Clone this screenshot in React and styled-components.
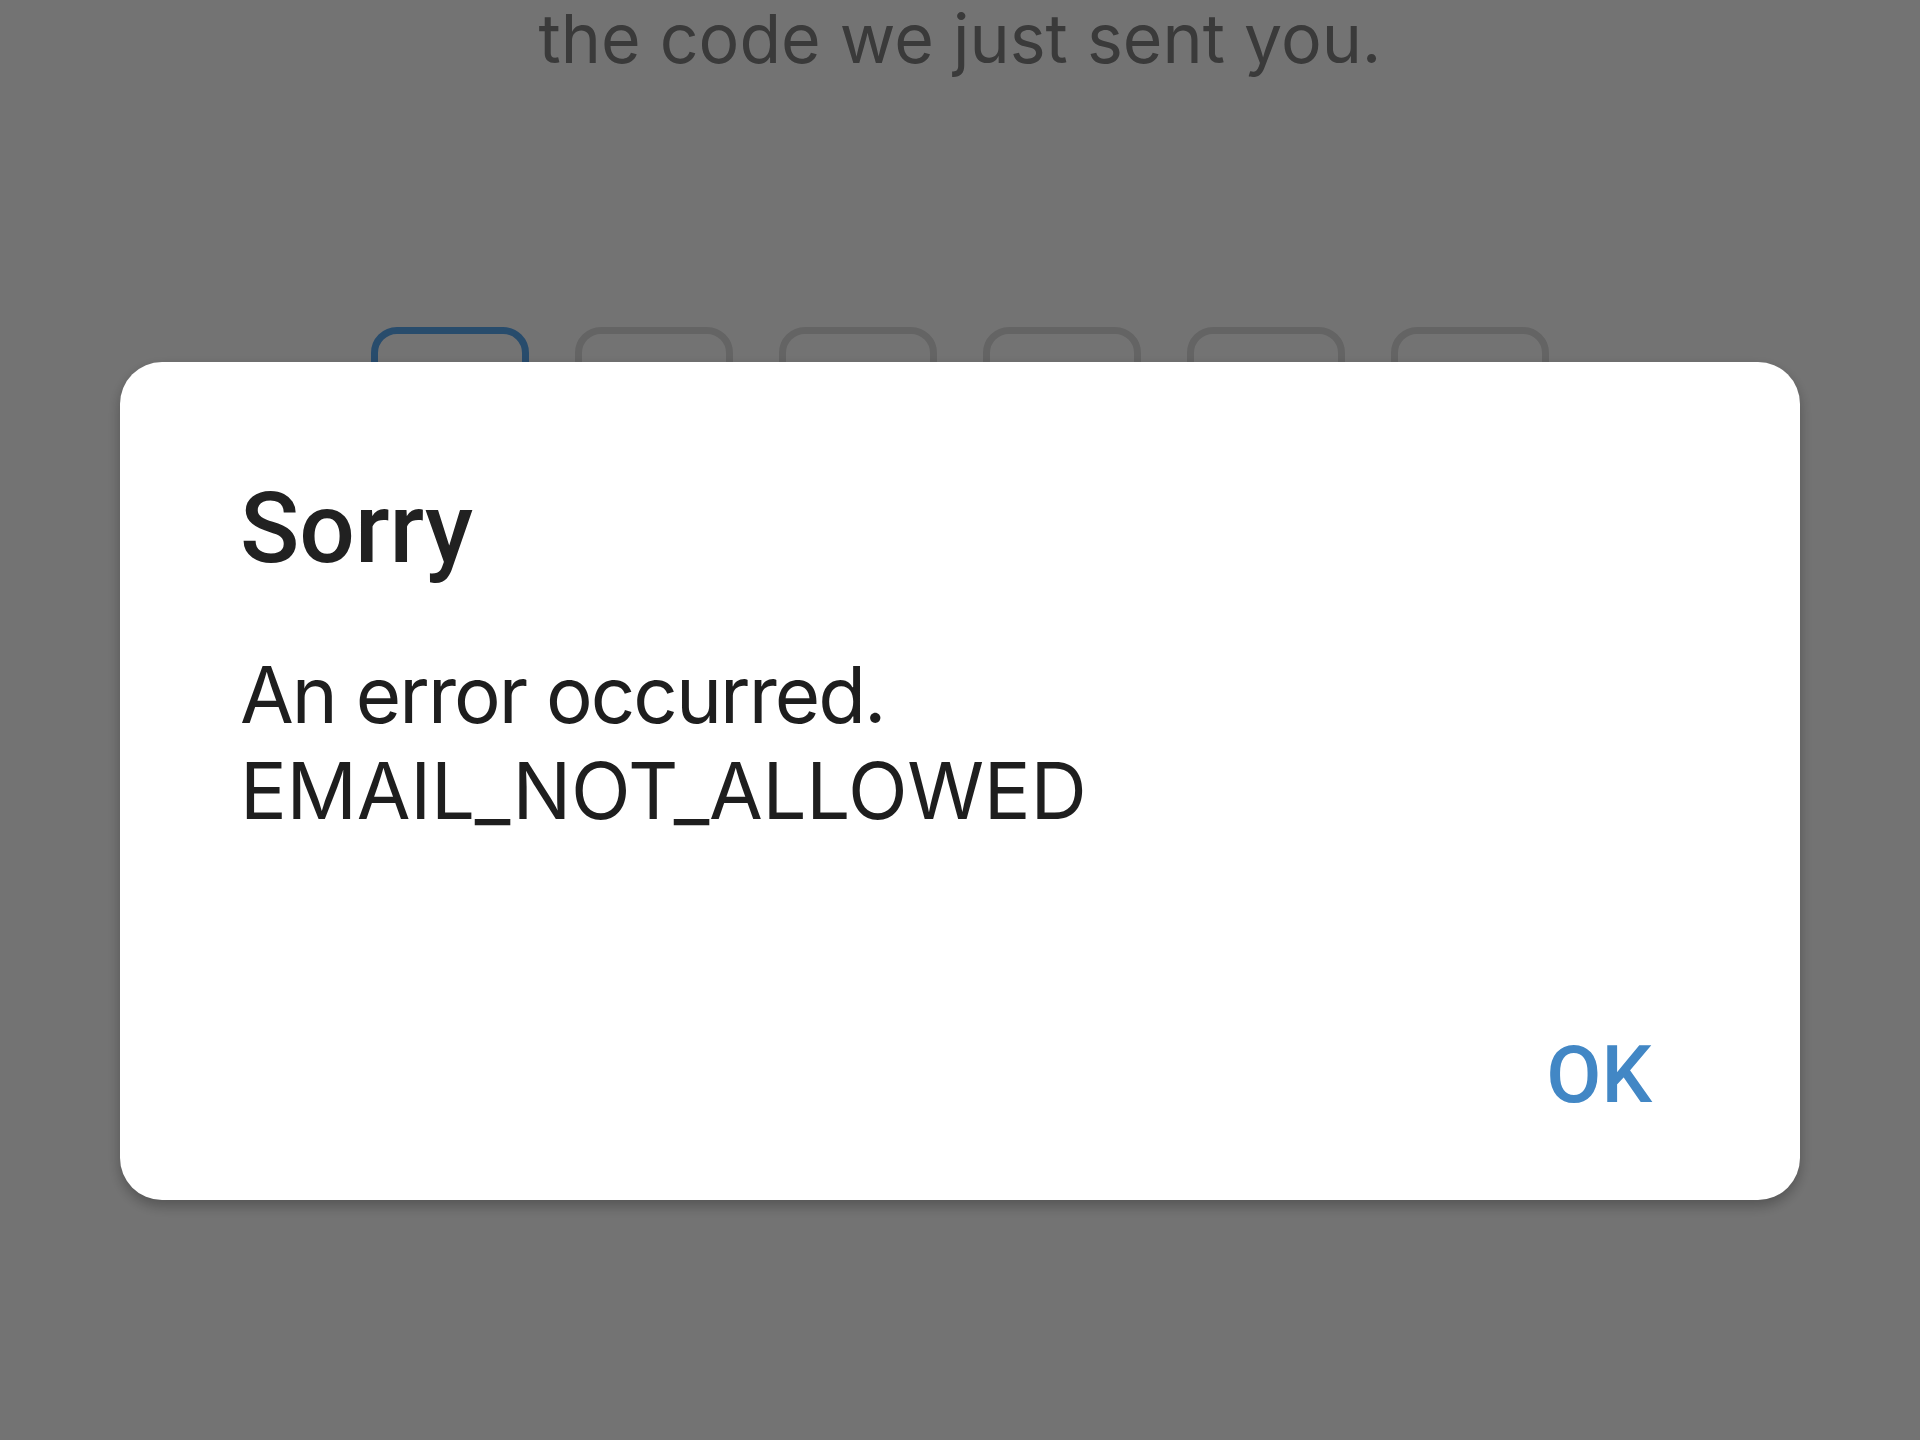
import React from "react";
import styled, { createGlobalStyle } from "styled-components";

const Global = createGlobalStyle`
  html, body { margin: 0; padding: 0; background: #ffffff; }
  body { width: 1920px; height: 1440px; overflow: hidden; font-family: "Inter", "Liberation Sans", sans-serif; }
`;

const Page = styled.div`
  width: 1920px;
  height: 1440px;
  display: flex;
  flex-direction: column;
  align-items: center;
  background: #ffffff;
`;

const Subtitle = styled.p`
  margin: -3px 0 0;
  font-family: "Inter", "Liberation Sans", sans-serif;
  font-size: 68px;
  line-height: 82px;
  color: #818181;
  text-align: center;
`;

const CodeRow = styled.div`
  margin-top: 248px;
  display: flex;
  gap: 46px;
`;

const CodeBox = styled.div`
  width: 158px;
  height: 180px;
  box-sizing: border-box;
  border: 7px solid ${(p) => (p.$active ? "#5aa8f0" : "#dedede")};
  border-radius: 26px;
  background: #ffffff;
`;

const Scrim = styled.div`
  position: fixed;
  inset: 0;
  background: rgba(0, 0, 0, 0.55);
  display: flex;
  flex-direction: column;
  align-items: center;
  padding-top: 362px;
  box-sizing: border-box;
`;

const Dialog = styled.div`
  width: 1680px;
  height: 838px;
  box-sizing: border-box;
  background: #ffffff;
  border-radius: 42px;
  box-shadow: 0 6px 14px rgba(0, 0, 0, 0.28);
  padding: 109px 148px 78px 120px;
  display: flex;
  flex-direction: column;
`;

const Title = styled.h2`
  margin: 0;
  font-family: "Roboto", "Liberation Sans", sans-serif;
  font-weight: 500;
  font-size: 98px;
  line-height: 115px;
  color: #212121;
`;

const Message = styled.p`
  margin: 61px 0 0;
  font-family: "Inter", "Liberation Sans", sans-serif;
  font-weight: 400;
  font-size: 78px;
  line-height: 96px;
  color: #1e1e1e;
`;

const Line = styled.span`
  display: block;
  letter-spacing: ${(p) => p.$tracking || 0}px;
`;

const Actions = styled.div`
  margin-top: auto;
  display: flex;
  justify-content: flex-end;
`;

const TextButton = styled.button`
  border: none;
  background: none;
  padding: 0;
  font-family: "Roboto", "Liberation Sans", sans-serif;
  font-weight: 500;
  font-size: 80px;
  line-height: 94px;
  color: #4287c5;
  cursor: pointer;
`;

export default function App() {
  return (
    <>
      <Global />
      <Page>
        <Subtitle>the code we just sent you.</Subtitle>
        <CodeRow>
          {[0, 1, 2, 3, 4, 5].map((i) => (
            <CodeBox key={i} $active={i === 0} />
          ))}
        </CodeRow>
      </Page>
      <Scrim>
        <Dialog role="alertdialog">
          <Title>Sorry</Title>
          <Message>
            <Line $tracking={-2}>An error occurred.</Line>
            <Line $tracking={-0.3}>EMAIL_NOT_ALLOWED</Line>
          </Message>
          <Actions>
            <TextButton>OK</TextButton>
          </Actions>
        </Dialog>
      </Scrim>
    </>
  );
}
